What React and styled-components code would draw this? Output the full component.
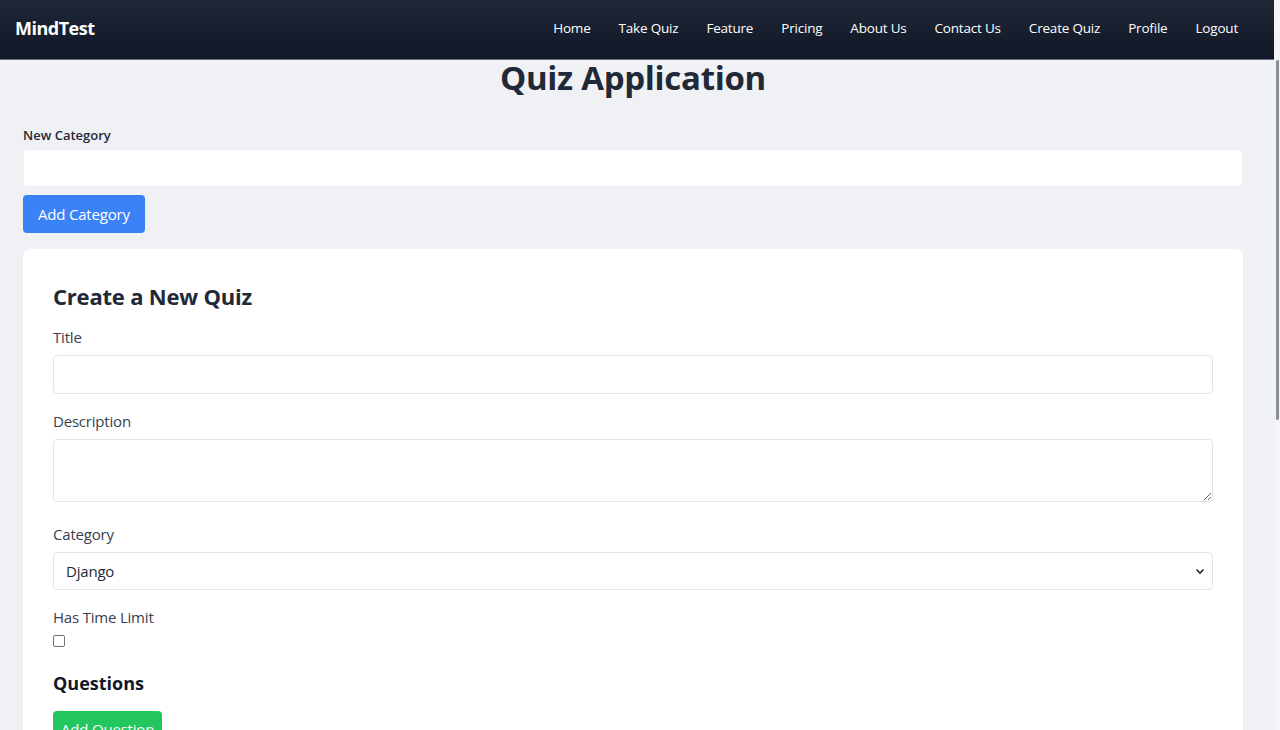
import React from "react";
import styled, { createGlobalStyle } from "styled-components";

const GlobalStyle = createGlobalStyle`
  html, body {
    margin: 0;
    padding: 0;
    overflow: hidden;
    background: #f0f1f4;
    font-family: "Open Sans", "Noto Sans", sans-serif;
  }
  * { box-sizing: border-box; }
`;

const Page = styled.div`
  min-height: 100vh;
  background: #f0f1f4;
`;

const Navbar = styled.nav`
  height: 60px;
  display: flex;
  align-items: center;
  justify-content: space-between;
  padding: 0 42px 3px 15px;
  background: linear-gradient(180deg, #1f2737 0%, #111726 100%);
  border-bottom: 1px solid #6b7280;
`;

const Logo = styled.div`
  color: #ffffff;
  font-size: 18px;
  font-weight: 700;
  letter-spacing: -0.5px;
`;

const NavLinks = styled.div`
  display: flex;
  gap: 28px;
`;

const NavLink = styled.a`
  color: #ffffff;
  font-size: 13.5px;
  letter-spacing: -0.2px;
  text-decoration: none;
`;

const Main = styled.main`
  width: 1220px;
  margin-left: 23px;
`;

const PageTitle = styled.h1`
  margin: 0 0 30px;
  text-align: center;
  color: #1f2937;
  font-size: 33px;
  line-height: 36px;
  font-weight: 700;
  letter-spacing: -0.3px;
`;

const SmallLabel = styled.label`
  display: block;
  color: #1f2937;
  font-size: 13px;
  font-weight: 600;
  margin-bottom: 5px;
`;

const TopInput = styled.input`
  display: block;
  width: 100%;
  height: 38px;
  border: 1px solid #eceef2;
  border-radius: 4px;
  background: #ffffff;
  outline: none;
`;

const Button = styled.button`
  display: inline-block;
  border: none;
  border-radius: 4px;
  color: #ffffff;
  font-family: inherit;
  font-size: 15px;
  letter-spacing: -0.2px;
  background: ${(p) => (p.$green ? "#22c55e" : "#3b82f6")};
  height: ${(p) => (p.$green ? "36px" : "38px")};
  padding: 0 ${(p) => (p.$green ? "8px" : "15px")};
  margin-top: ${(p) => p.$mt || "0"};
`;

const Card = styled.section`
  margin-top: 16px;
  background: #ffffff;
  border-radius: 8px;
  padding: 32px 30px 30px;
  min-height: 520px;
`;

const CardTitle = styled.h2`
  margin: 0 0 16px;
  color: #1f2937;
  font-size: 22px;
  line-height: 30px;
  font-weight: 700;
  letter-spacing: -0.2px;
`;

const Field = styled.div`
  margin-bottom: ${(p) => p.$mb || "25px"};
`;

const Label = styled.label`
  display: block;
  color: #374151;
  font-size: 15px;
  line-height: 20px;
  letter-spacing: -0.2px;
  margin-bottom: 8px;
`;

const TextInput = styled.input`
  display: block;
  width: 100%;
  height: 39px;
  border: 1px solid #e3e5e9;
  border-radius: 4px;
  background: #fff;
  outline: none;
`;

const TextArea = styled.textarea`
  display: block;
  width: 100%;
  height: 63px;
  border: 1px solid #e3e5e9;
  border-radius: 4px;
  background: #fff;
  outline: none;
  resize: vertical;
`;

const SelectWrap = styled.div`
  position: relative;
  height: 38px;
  border: 1px solid #e3e5e9;
  border-radius: 4px;
  display: flex;
  align-items: center;
  justify-content: space-between;
  padding: 0 6px 0 12px;
  color: #1f2937;
  font-size: 15px;
  letter-spacing: -0.2px;
`;

const Checkbox = styled.div`
  width: 12px;
  height: 12px;
  border: 1px solid #6b7280;
  border-radius: 2px;
  margin-top: 3px;
`;

const SectionTitle = styled.h3`
  margin: 0 0 16px;
  color: #111827;
  font-size: 18px;
  line-height: 24px;
  font-weight: 700;
`;

const ScrollTrack = styled.div`
  position: fixed;
  top: 0;
  right: 0;
  width: 6px;
  height: 100vh;
  background: #f3f4f6;
`;

const ScrollThumb = styled.div`
  margin: 60px 0 0 2px;
  width: 3px;
  height: 360px;
  border-radius: 2px;
  background: #8c8f94;
`;

const links = ["Home", "Take Quiz", "Feature", "Pricing", "About Us", "Contact Us", "Create Quiz", "Profile", "Logout"];

export default function App() {
  return (
    <Page>
      <GlobalStyle />
      <Navbar>
        <Logo>MindTest</Logo>
        <NavLinks>
          {links.map((l) => (
            <NavLink key={l} href="#">{l}</NavLink>
          ))}
        </NavLinks>
      </Navbar>
      <Main>
        <PageTitle>Quiz Application</PageTitle>
        <SmallLabel>New Category</SmallLabel>
        <TopInput />
        <Button $mt="8px">Add Category</Button>
        <Card>
          <CardTitle>Create a New Quiz</CardTitle>
          <Field $mb="17px">
            <Label>Title</Label>
            <TextInput />
          </Field>
          <Field $mb="22px">
            <Label>Description</Label>
            <TextArea />
          </Field>
          <Field $mb="17px">
            <Label>Category</Label>
            <SelectWrap>
              <span>Django</span>
              <svg width="12" height="12" viewBox="0 0 12 12">
                <path d="M2.5 4.5 L6 8 L9.5 4.5" fill="none" stroke="#1f2937" strokeWidth="1.6" />
              </svg>
            </SelectWrap>
          </Field>
          <Field $mb="24px">
            <Label>Has Time Limit</Label>
            <Checkbox />
          </Field>
          <SectionTitle>Questions</SectionTitle>
          <Button $green>Add Question</Button>
        </Card>
      </Main>
      <ScrollTrack>
        <ScrollThumb />
      </ScrollTrack>
    </Page>
  );
}
